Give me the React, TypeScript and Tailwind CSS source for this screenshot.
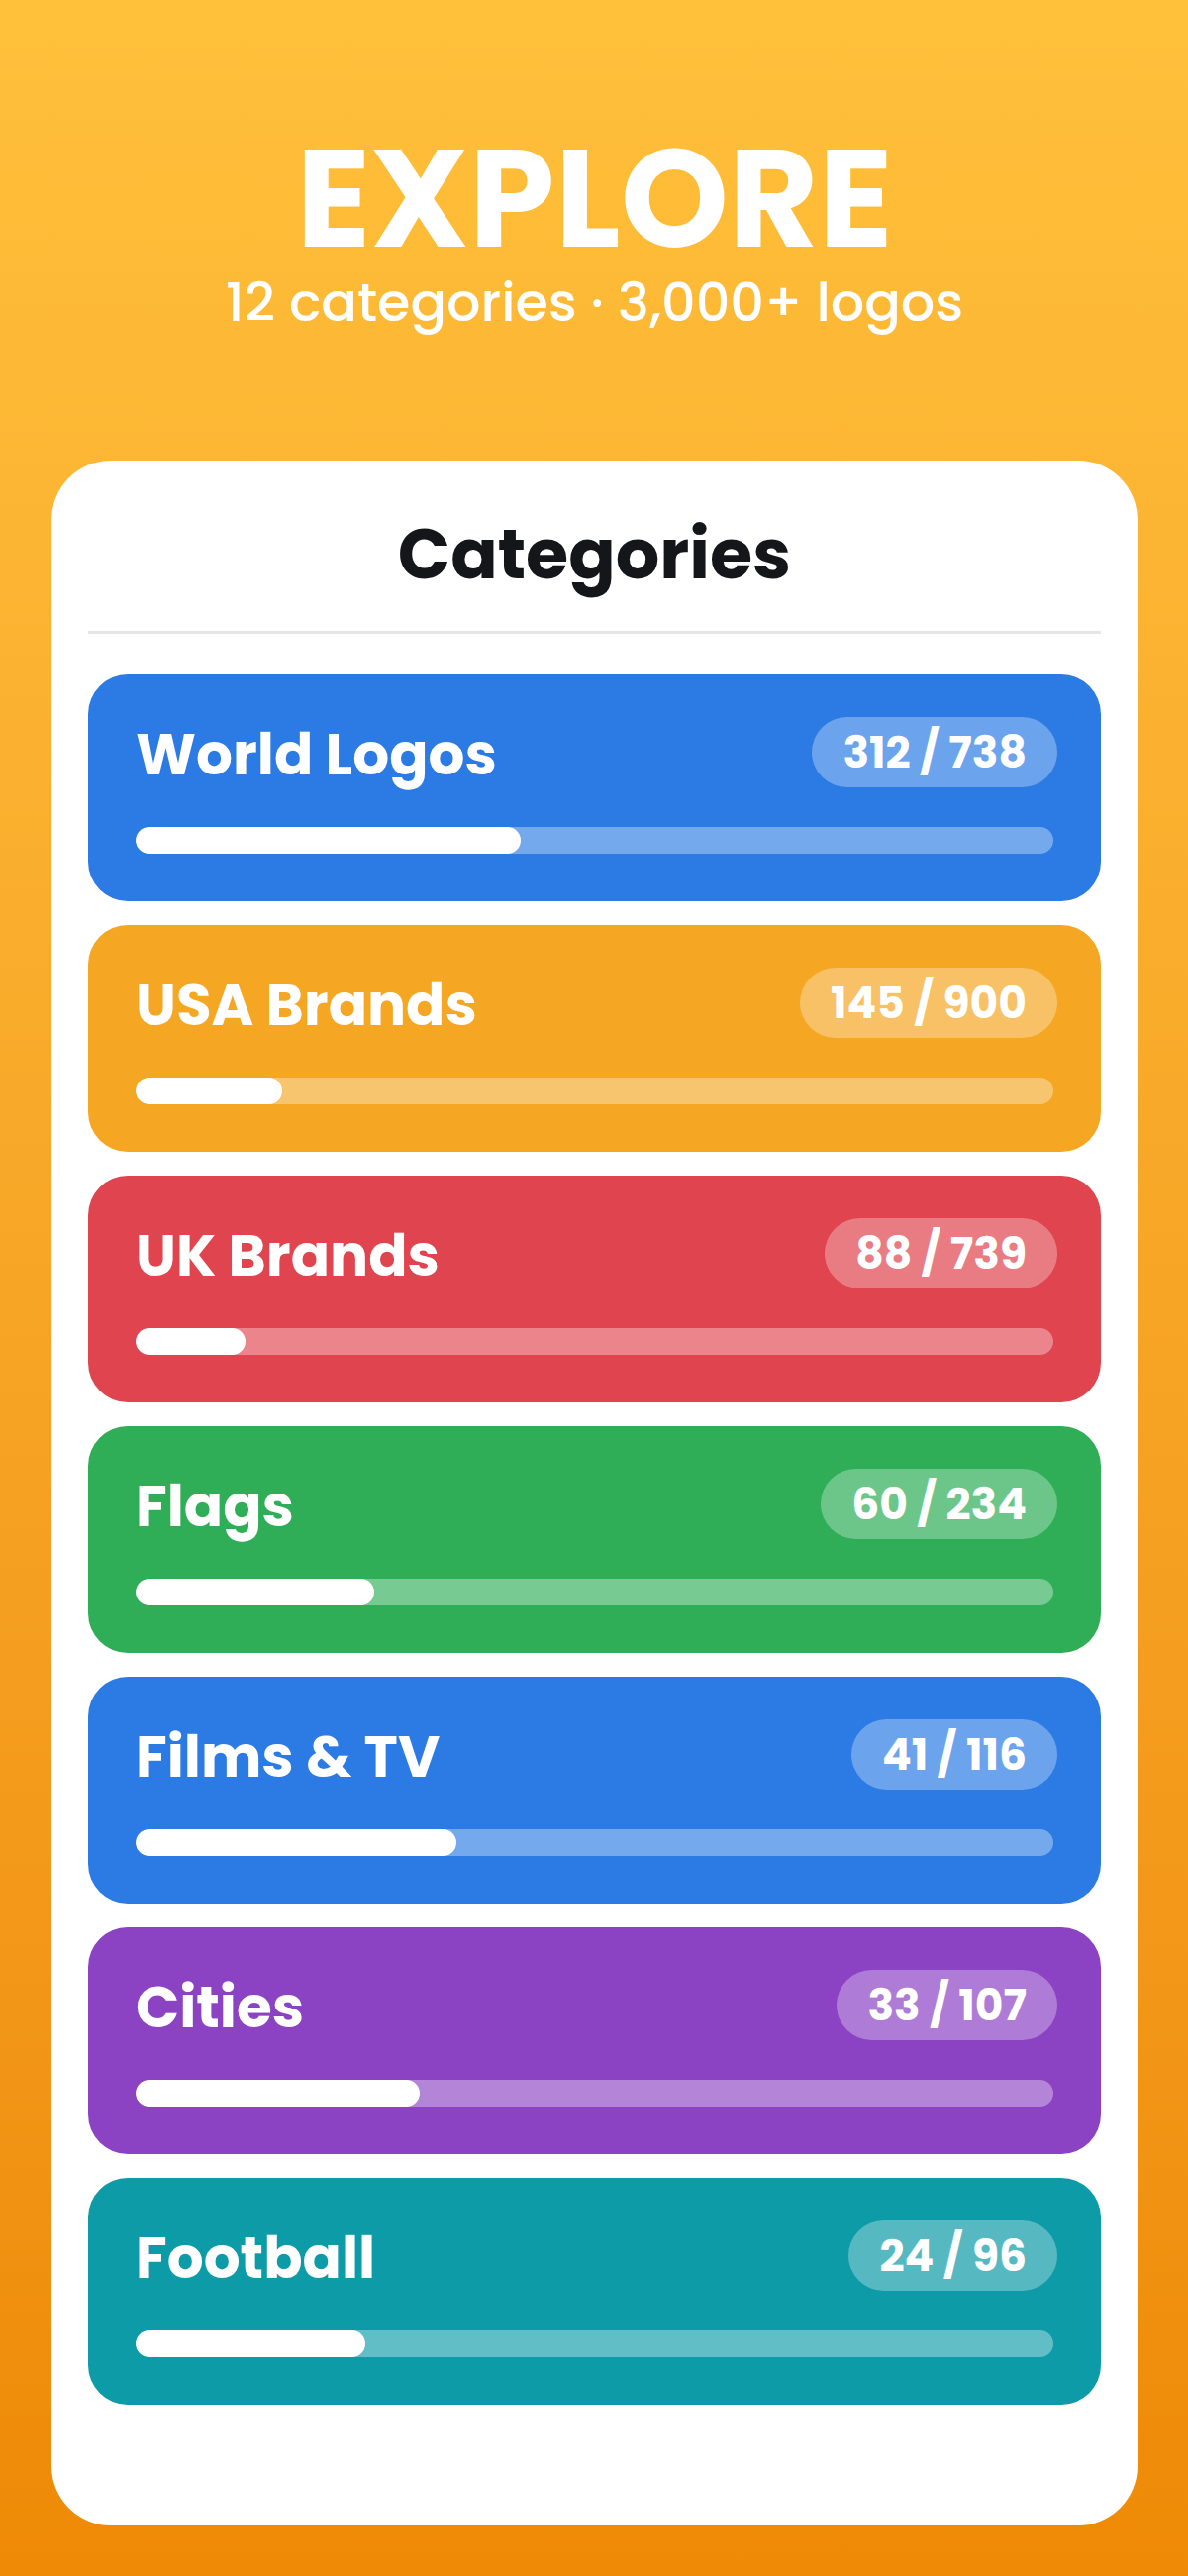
type Category = {
  name: string
  done: number
  total: number
  fill: number
  color: string
}

const categories: Category[] = [
  { name: 'World Logos', done: 312, total: 738, fill: 42, color: 'bg-[#2c7be5]' },
  { name: 'USA Brands', done: 145, total: 900, fill: 16, color: 'bg-[#f5a623]' },
  { name: 'UK Brands', done: 88, total: 739, fill: 12, color: 'bg-[#e0444e]' },
  { name: 'Flags', done: 60, total: 234, fill: 26, color: 'bg-[#2fae57]' },
  { name: 'Films & TV', done: 41, total: 116, fill: 35, color: 'bg-[#2c7be5]' },
  { name: 'Cities', done: 33, total: 107, fill: 31, color: 'bg-[#8b43c4]' },
  { name: 'Football', done: 24, total: 96, fill: 25, color: 'bg-[#0d9ba8]' },
]

const CategoryCard = ({ name, done, total, fill, color }: Category) => {
  return (
    <li className={`${color} rounded-[40px] px-12 pt-[43px] pb-12 text-white`}>
      {/* The count pill hangs slightly past the end of the bar */}
      <div className="flex items-start justify-between -mr-1">
        <h3 className="pt-1 text-[58px] leading-[68px] font-bold">{name}</h3>
        <span className="rounded-full bg-white/30 px-[31px] pt-px text-[44px] leading-[70px] font-bold">
          {done} / {total}
        </span>
      </div>
      <div className="mt-[39px] h-[27px] rounded-full bg-white/35 overflow-hidden">
        <div className="h-full rounded-full bg-white" style={{ width: `${fill}%` }} />
      </div>
    </li>
  )
}

const App = () => {
  return (
    <div className="min-h-screen bg-linear-to-b from-[#ffc03a] to-[#ee8a05] pl-[52px] pr-[51px] pt-[133px] pb-[51px] font-['Poppins','Inter',sans-serif]">
      <header className="text-center text-white">
        <h1 className="text-[139px] leading-[136px] font-bold">EXPLORE</h1>
        <p className="text-[54px] leading-[72px] font-medium">12 categories · 3,000+ logos</p>
      </header>

      <main className="mt-[124px] rounded-[60px] bg-white px-[37px] pb-[122px]">
        <h2 className="border-b-3 border-[#e6e6e6] pt-[55px] pb-[37px] text-center text-[70px] leading-[80px] font-bold text-[#14161a]">
          Categories
        </h2>
        <ul className="mt-[41px] flex flex-col gap-6">
          {categories.map((category) => (
            <CategoryCard key={category.name} {...category} />
          ))}
        </ul>
      </main>
    </div>
  )
}

export default App
